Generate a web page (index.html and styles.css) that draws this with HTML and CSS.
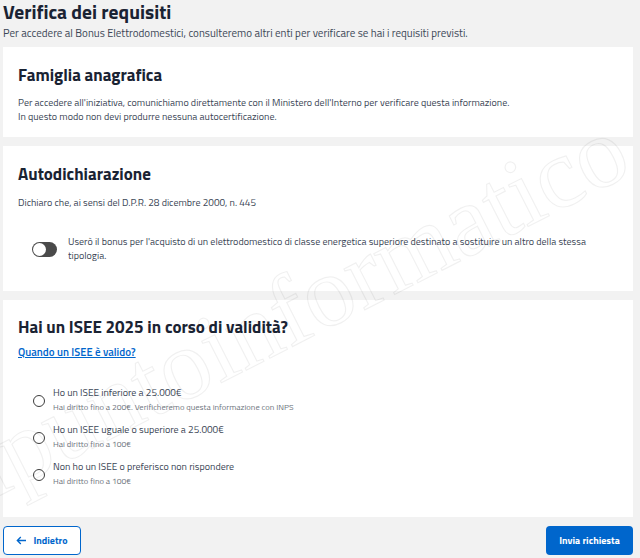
FILE: index.html
```html
<!DOCTYPE html>
<html lang="it">
<head>
    <meta charset="UTF-8">
    <meta name="viewport" content="width=device-width, initial-scale=1.0">
    <title>Verifica dei requisiti</title>
    <link rel="stylesheet" href="styles.css">
</head>
<body>

    <div class="page">
        <h1>Verifica dei requisiti</h1>
        <p class="intro">Per accedere al Bonus Elettrodomestici, consulteremo altri enti per verificare se hai i requisiti previsti.</p>

        <section class="card card-famiglia">
            <h2>Famiglia anagrafica</h2>
            <p class="small">Per accedere all'iniziativa, comunichiamo direttamente con il Ministero dell'Interno per verificare questa informazione.<br>
            In questo modo non devi produrre nessuna autocertificazione.</p>
        </section>

        <section class="card card-auto">
            <h2>Autodichiarazione</h2>
            <p class="small">Dichiaro che, ai sensi del D.P.R. 28 dicembre 2000, n. 445</p>
            <label class="toggle-row">
                <span class="toggle"><span class="knob"></span></span>
                <span class="toggle-text">Userò il bonus per l'acquisto di un elettrodomestico di classe energetica superiore destinato a sostituire un altro della stessa tipologia.</span>
            </label>
        </section>

        <section class="card card-isee">
            <h2>Hai un ISEE 2025 in corso di validità?</h2>
            <a class="link" href="#">Quando un ISEE è valido?</a>

            <div class="radios">
                <label class="radio">
                    <span class="circle"></span>
                    <span>
                        <span class="r-title">Ho un ISEE inferiore a 25.000€</span>
                        <span class="r-sub">Hai diritto fino a 200€. Verificheremo questa informazione con INPS</span>
                    </span>
                </label>
                <label class="radio">
                    <span class="circle"></span>
                    <span>
                        <span class="r-title">Ho un ISEE uguale o superiore a 25.000€</span>
                        <span class="r-sub">Hai diritto fino a 100€</span>
                    </span>
                </label>
                <label class="radio">
                    <span class="circle"></span>
                    <span>
                        <span class="r-title">Non ho un ISEE o preferisco non rispondere</span>
                        <span class="r-sub">Hai diritto fino a 100€</span>
                    </span>
                </label>
            </div>
        </section>

        <div class="actions">
            <button class="btn-back">
                <svg width="11" height="9" viewBox="0 0 11 9"><path d="M10 4.5H1.5M4.8 1L1.3 4.5L4.8 8" fill="none" stroke="#0066cc" stroke-width="1.3"/></svg>
                Indietro
            </button>
            <button class="btn-send">Invia richiesta</button>
        </div>
    </div>

    <!-- watermark -->
    <div class="watermark">ilpuntoinformatico</div>

</body>
</html>
```

FILE: styles.css
```css
body {
    margin: 0;
    background: #f2f2f2;
    font-family: "Titillium Web", Lato, "Open Sans", sans-serif;
    color: #3b4656;
    overflow: hidden;
}
.page {
    padding: 0 7px 0 3px;
}
h1 {
    font-size: 19.5px;
    font-weight: bold;
    color: #1a2333;
    margin: 0;
    line-height: 25px;
}
.intro {
    font-size: 11px;
    margin: 1px 0 7px;
    line-height: 14px;
}
.card {
    background: white;
    padding: 16px 15px 13px;
    margin-bottom: 9px;
}
h2 {
    font-size: 17px;
    color: #1a2333;
    margin: 0 0 9px;
    line-height: 24px;
}
.small {
    font-size: 10px;
    line-height: 14px;
    margin: 0;
}
.card-auto { padding-bottom: 28px; }
.card-auto h2 { margin-bottom: 10px; }

.toggle-row {
    display: flex;
    align-items: center;
    gap: 11px;
    margin: 25px 0 0 14px;
    font-size: 10px;
    line-height: 14px;
}
.toggle {
    flex: none;
    width: 25px;
    height: 15px;
    border-radius: 8px;
    background: #4a4a4a;
    position: relative;
}
.knob {
    position: absolute;
    left: 1px;
    top: 1px;
    width: 13px;
    height: 13px;
    border-radius: 50%;
    background: white;
}
.toggle-text { padding-right: 30px; }

.card-isee { padding-top: 15px; padding-bottom: 29px; }
.card-isee h2 { margin-bottom: 6px; }
.link {
    display: block;
    width: max-content;
    font-size: 11px;
    line-height: 14px;
    font-weight: 600;
    color: #0066cc;
}
.radios {
    margin-top: 27px;
    padding-left: 14px;
    display: flex;
    flex-direction: column;
    gap: 9px;
}
.radio {
    display: flex;
    align-items: center;
    gap: 8px;
}
.circle {
    flex: none;
    width: 10px;
    height: 10px;
    border: 1.5px solid #3d3d3d;
    border-radius: 50%;
    margin: 1px 0 0 1px;
}
.r-title {
    display: block;
    font-size: 10px;
    line-height: 14px;
}
.r-sub {
    display: block;
    font-size: 8.5px;
    color: #6f7680;
    line-height: 14px;
}

.actions {
    display: flex;
    justify-content: space-between;
}
button {
    font-family: inherit;
    font-size: 10px;
    font-weight: bold;
    border-radius: 4px;
    height: 29px;
    cursor: pointer;
}
.btn-back {
    width: 78px;
    background: white;
    color: #0066cc;
    border: 1.5px solid #0066cc;
    display: flex;
    align-items: center;
    justify-content: center;
    gap: 6px;
}
.btn-send {
    width: 87px;
    background: #0066cc;
    color: white;
    border: none;
}

.watermark {
    position: absolute;
    left: -48px;
    top: 433px;
    font-family: "Liberation Serif", serif;
    font-size: 100px;
    line-height: 100px;
    color: transparent;
    -webkit-text-stroke: 1.2px rgba(0, 0, 0, 0.06);
    transform: rotate(-27deg);
    transform-origin: 0 50%;
    pointer-events: none;
    white-space: nowrap;
}
```
